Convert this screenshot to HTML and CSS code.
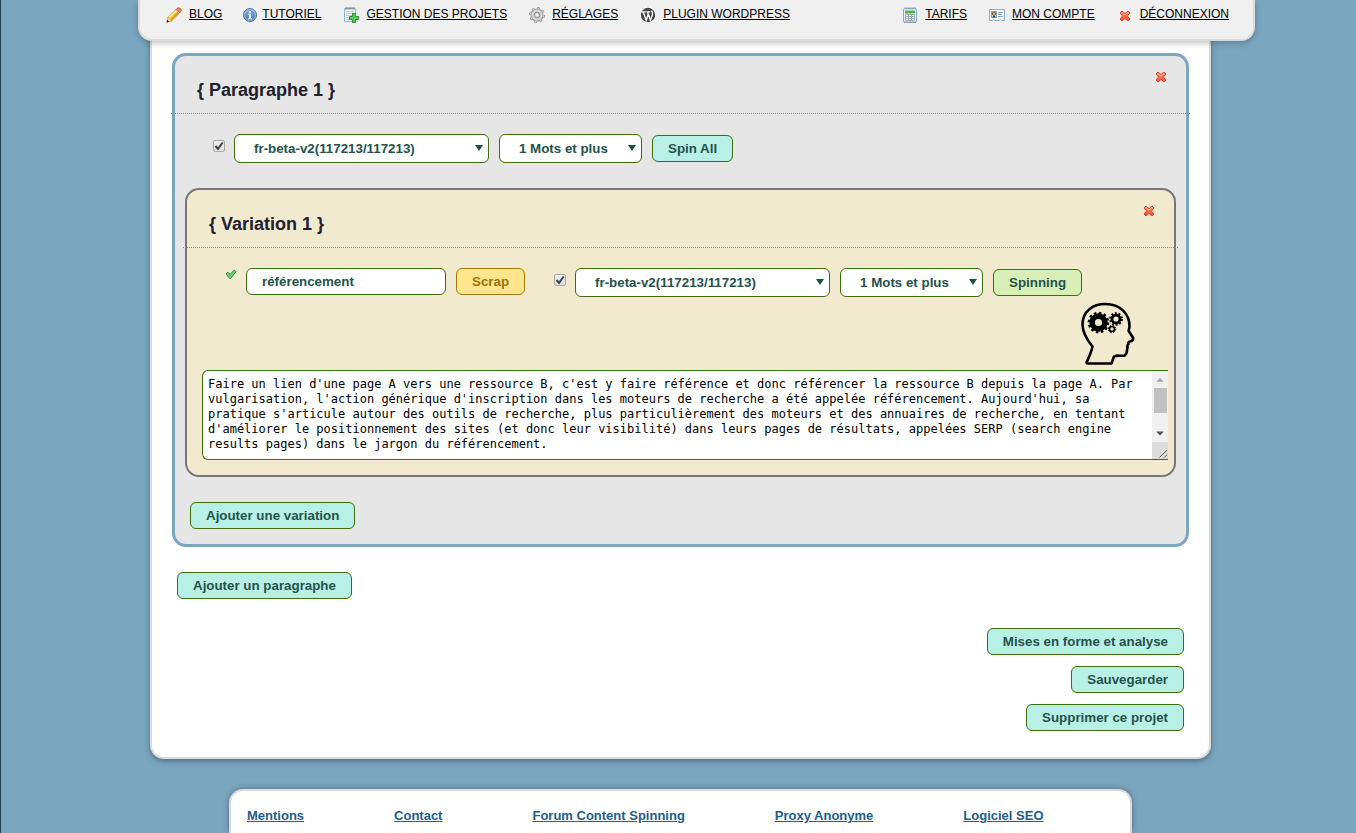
FILE: index.html
```html
<!DOCTYPE html>
<html lang="fr">
<head>
<meta charset="utf-8">
<title>Content Spinning</title>
<link rel="stylesheet" href="styles.css">
</head>
<body>
<svg class="defs" aria-hidden="true">
  <defs>
    <linearGradient id="red" x1="0" y1="0" x2="0" y2="1"><stop offset="0" stop-color="#ff9a78"/><stop offset="1" stop-color="#f04a28"/></linearGradient>
    <linearGradient id="blue" x1="0" y1="0" x2="0" y2="1"><stop offset="0" stop-color="#88b0e2"/><stop offset="1" stop-color="#4777b8"/></linearGradient>
    <symbol id="cross" viewBox="0 0 12 12">
      <path d="M3 1 L6 3.6 L9 1 L11 3 L8.4 6 L11 9 L9 11 L6 8.4 L3 11 L1 9 L3.6 6 L1 3Z" fill="url(#red)" stroke="#d8432a" stroke-linejoin="round"/>
      <path d="M3 2.4 L6 5 L9 2.4" fill="none" stroke="#ffc0a6" stroke-width=".8"/>
    </symbol>
  </defs>
</svg>
<div class="page">
  <header class="topbar">
    <nav class="nav">
      <a href="#blog"><svg viewBox="0 0 16 16"><path d="M.8 15.2 L2 10.6 L11 1.6 Q12.6.2 14.4 1.6 Q15.9 3.2 14.4 5 L5.4 14Z" fill="#f7c531" stroke="#b27a16" stroke-width=".8"/><path d="M3.2 10.6 L10.8 3" stroke="#ffea8c" stroke-width="1.5"/><path d="M4.8 13 L12.8 5" stroke="#dd9518" stroke-width="1.2"/><path d="M11 1.6 Q12.6.2 14.4 1.6 Q15.9 3.2 14.4 5 L13.6 5.8 L10.2 2.4Z" fill="#e58a80" stroke="#b4534b" stroke-width=".6"/><path d="M9.8 2.8 L13.2 6.2" stroke="#ccc" stroke-width="1"/><path d="M.8 15.2 L2 10.8 L5.2 14Z" fill="#f2d2a2"/><path d="M.5 15.5 L1.2 12.8 L3.2 14.8Z" fill="#3b2220"/></svg><span>BLOG</span></a>
      <a class="compact" href="#tutoriel"><svg viewBox="1 1 14 14"><rect x="1" y="1" width="14" height="14" fill="#f8f8f8"/><circle cx="8" cy="8" r="6.5" fill="url(#blue)" stroke="#4b76ae"/><circle cx="8" cy="8" r="5.500" fill="none" stroke="#a9c6ea" stroke-width=".7"/><path d="M7 4h2v1.700H7zM6.200 6.800H9v4.400h1v1H6v-1h1V7.700h-.8z" fill="#fff"/></svg><span>TUTORIEL</span></a>
      <a href="#projets"><svg viewBox="0 0 16 16"><path d="M1.500 1.500h11v13h-11z" fill="#f7fbff" stroke="#8bb5dd"/><path d="M3 4.500h8M3 6.500h8M3 8.500h6M3 10.500h5M3 12.500h4" stroke="#b8cbdc" stroke-width=".9"/><path d="M3 0v2.800M5 0v2.800M7 0v2.800M9 0v2.800M11 0v2.800" stroke="#777" stroke-width=".9"/><path d="M9.500 6.500h3v3h3v3h-3v3h-3v-3h-3v-3h3z" fill="#5ccb51" stroke="#24882a" stroke-width=".9"/></svg><span>GESTION DES PROJETS</span></a>
      <a href="#reglages"><svg viewBox="0 0 16 16"><circle cx="8" cy="8" r="6.900" fill="none" stroke="#888" stroke-width="2" stroke-dasharray="2.700 2.700"/><circle cx="8" cy="8" r="4.600" fill="none" stroke="#929292" stroke-width="4"/><circle cx="8" cy="8" r="4.500" fill="none" stroke="#d3d3d3" stroke-width="2.500"/><circle cx="8" cy="8" r="6.700" fill="none" stroke="#d0d0d0" stroke-width="1.200" stroke-dasharray="1.800 3.460" stroke-dashoffset="-.4"/><circle cx="8" cy="8" r="2.300" fill="#f0f0f0" stroke="#888" stroke-width=".8"/></svg><span>RÉGLAGES</span></a>
      <a href="#plugin"><svg viewBox="0 0 16 16"><circle cx="8" cy="8" r="8" fill="#fff"/><circle cx="8" cy="8" r="7.200" fill="#464646"/><path d="M1.800 4.900h4M6.300 4.900h4M3.200 5 L6.200 13.200 L8.300 7 M7.500 5 L10.400 13.200 L12.500 7.500 Q13 5.500 11.500 3.800" fill="none" stroke="#fff" stroke-width="1.400"/></svg><span>PLUGIN WORDPRESS</span></a>
      <a class="push" href="#tarifs"><svg viewBox="0 0 16 16"><rect x="1.500" y="1.500" width="13" height="13.500" rx="1" fill="#e9f2fb" stroke="#7fabd8"/><path d="M3 3.500h10v3H3z" fill="#4fb449"/><path d="M3 0v2.500M5 0v2.500M7 0v2.500M9 0v2.500M11 0v2.500M13 0v2.500" stroke="#999" stroke-width=".8"/><path d="M3.500 7.500h9v6h-9zM3.500 9.500h9M3.500 11.500h9M6.500 7.500v6M9.500 7.500v6" fill="#fff" stroke="#8c9aa8" stroke-width=".8"/><path d="M2 15.500h12" stroke="#889" stroke-width=".8"/></svg><span>TARIFS</span></a>
      <a href="#compte"><svg viewBox="0 0 16 16"><path d="M.5 2.500h15v11h-3l-1-1-1 1h-5l-1-1-1 1h-3z" fill="#f5faff" stroke="#86b0dc"/><path d="M2.500 4.500h5v6h-5z" fill="#d9e5f3" stroke="#6d8fb8" stroke-width=".8"/><circle cx="5" cy="6.700" r="1.700" fill="#e7ae51" stroke="#5b3a17" stroke-width=".8"/><path d="M3 10.300q2-2.600 4 0z" fill="#252d45"/><path d="M9 5.500h5M9 7.500h4M9 9.500h5" stroke="#88a9cc"/></svg><span>MON COMPTE</span></a>
      <a href="#deconnexion"><svg viewBox="-2 -3 16 16"><use href="#cross" width="12" height="12"/></svg><span>DÉCONNEXION</span></a>
    </nav>
  </header>

  <main class="content">
    <section class="panel">
      <div class="panel-head">
        <h2>{ Paragraphe 1 }</h2>
        <button class="close" aria-label="Supprimer le paragraphe"><svg viewBox="0 0 12 12"><use href="#cross"/></svg></button>
      </div>
      <div class="tools">
        <label class="tick"><input type="checkbox" checked aria-label="Activer le dictionnaire"><svg viewBox="0 0 12 12"><path d="M2.500 6 L5 8.800 L9.700 2.500" /></svg></label>
        <span class="pick wide"><select aria-label="Dictionnaire"><option>fr-beta-v2(117213/117213)</option></select></span>
        <span class="pick"><select aria-label="Nombre de mots"><option>1 Mots et plus</option></select></span>
        <button class="btn">Spin All</button>
      </div>

      <section class="variation">
        <div class="panel-head">
          <h2>{ Variation 1 }</h2>
          <button class="close" aria-label="Supprimer la variation"><svg viewBox="0 0 12 12"><use href="#cross"/></svg></button>
        </div>
        <div class="tools">
          <svg class="ok" viewBox="0 0 12 12"><path d="M1 5 L3 3.200 L5 5.400 L9.300 1 L11 2.700 L5.200 10 Z" fill="#67d36d" stroke="#2f9640" stroke-linejoin="round"/></svg>
          <input class="field" type="text" value="référencement" aria-label="Mot-clé">
          <button class="btn amber">Scrap</button>
          <label class="tick second"><input type="checkbox" checked aria-label="Activer le dictionnaire"><svg viewBox="0 0 12 12"><path d="M2.500 6 L5 8.800 L9.700 2.500" /></svg></label>
          <span class="pick wide"><select aria-label="Dictionnaire"><option>fr-beta-v2(117213/117213)</option></select></span>
          <span class="pick"><select aria-label="Nombre de mots"><option>1 Mots et plus</option></select></span>
          <button class="btn green">Spinning</button>
        </div>
        <div class="brain">
          <svg viewBox="0 0 54 64"><path d="M5.500 60.500 C8 55 10.500 50 11.500 44.500 C4.500 36 1.500 30 1.500 22.500 C1.500 9 12 2 24.500 2 C39 2 49 12 48.500 25 C48.300 27 47 28 48 29.500 L52.200 36 Q52.200 39 49 39.500 Q47 40 47.500 42 Q46 43 46.500 45.500 C45.500 48 47 51.500 43.500 53.500 C40 54.500 36 52.500 33 54.500 C32 57 31.500 59.500 30.500 61.500 L6.500 61.500Z" fill="none" stroke="#000" stroke-width="2.600" stroke-linejoin="round"/><g fill="none" stroke="#000"><circle cx="17.500" cy="20.500" r="6.400" stroke-width="5.600"/><circle cx="17.500" cy="20.500" r="9.700" stroke-width="2.200" stroke-dasharray="2.600 2.480"/><circle cx="35" cy="17" r="4" stroke-width="2.800"/><circle cx="35" cy="17" r="6" stroke-width="1.700" stroke-dasharray="2 1.770"/><circle cx="31" cy="27" r="2.500" stroke-width="1.700"/><circle cx="31" cy="27" r="3.700" stroke-width="1" stroke-dasharray="1.500 1.400"/></g></svg>
        </div>
        <div class="editor">
          <textarea aria-label="Texte de la variation">Faire un lien d'une page A vers une ressource B, c'est y faire référence et donc référencer la ressource B depuis la page A. Par vulgarisation, l'action générique d'inscription dans les moteurs de recherche a été appelée référencement. Aujourd'hui, sa pratique s'articule autour des outils de recherche, plus particulièrement des moteurs et des annuaires de recherche, en tentant d'améliorer le positionnement des sites (et donc leur visibilité) dans leurs pages de résultats, appelées SERP (search engine results pages) dans le jargon du référencement.</textarea>
          <div class="scroll" aria-hidden="true">
            <svg viewBox="0 0 17 17"><path d="M4.500 11 L8.500 7 L12.500 11Z" fill="#a3a3a3"/></svg>
            <i></i>
            <svg class="down" viewBox="0 0 17 17"><path d="M4.500 6.500 L8.500 10.500 L12.500 6.500Z" fill="#505050"/></svg>
            <svg class="grip" viewBox="0 0 17 17"><path d="M8 16 L16 8 M13 16 L16 13" stroke="#555"/></svg>
          </div>
        </div>
      </section>
      <div class="add"><button class="btn">Ajouter une variation</button></div>
    </section>

    <div class="add-par"><button class="btn">Ajouter un paragraphe</button></div>
    <div class="actions">
      <button class="btn">Mises en forme et analyse</button>
      <button class="btn">Sauvegarder</button>
      <button class="btn">Supprimer ce projet</button>
    </div>
  </main>

  <footer class="footer">
    <a href="#mentions">Mentions</a>
    <a href="#contact">Contact</a>
    <a href="#forum">Forum Content Spinning</a>
    <a href="#proxy">Proxy Anonyme</a>
    <a href="#logiciel">Logiciel SEO</a>
  </footer>
</div>
</body>
</html>
```
FILE: styles.css
```css
* { box-sizing: border-box; }
body {
  margin: 0;
  padding-left: 4px;
  border-left: 1px solid #233f52;
  background: #7ba6c0;
  font-family: "Liberation Sans", Arial, sans-serif;
  font-size: 13px;
}
.defs { position: absolute; width: 0; height: 0; }
.page {
  display: flex;
  flex-direction: column;
  max-width: 1061px;
  min-height: 100vh;
  margin: 0 auto;
}
.topbar {
  position: relative;
  z-index: 1;
  margin: 0 -44px 0 -12px;
  padding: 6px 24px 16px 26px;
  border: 2px solid #dadada;
  border-top: 0;
  border-radius: 0 0 14px 14px;
  background: #f0f0f0;
  box-shadow: 0 2px 6px rgba(0, 0, 0, .25);
}
.nav { display: flex; gap: 22px; }
.nav a {
  display: flex;
  gap: 7px;
  color: #000;
  font-size: 12px;
  line-height: 16px;
  white-space: nowrap;
}
.nav svg { width: 16px; height: 16px; margin-top: 1px; }
.nav .compact { gap: 5px; margin-left: -1px; }
.nav .compact svg { width: 14px; height: 14px; margin-top: 2px; }
.nav .push { margin-left: auto; }
.content {
  margin-top: -20px;
  padding: 32px 20px 26px;
  border: 2px solid #dadada;
  border-top: 0;
  border-radius: 0 0 14px 14px;
  background: #fff;
  box-shadow: 0 2px 6px rgba(0, 0, 0, .35);
}
.panel {
  border: 3px solid #7ba6c0;
  border-radius: 14px;
  background: #e6e6e6;
}
.panel-head {
  display: flex;
  justify-content: space-between;
  align-items: flex-start;
  margin: 0 -4px;
  padding: 15px 23px 12px 26px;
  border-bottom: 1px dotted #888;
}
h2 {
  margin: 9px 0 0;
  color: #20202f;
  font-size: 18px;
  line-height: 21px;
}
.close {
  width: 12px;
  height: 12px;
  padding: 0;
  border: 0;
  background: none;
}
.close svg { display: block; width: 12px; height: 12px; }
.tools {
  display: flex;
  align-items: center;
  gap: 10px;
  padding: 20px 10px 0 38px;
}
.btn, .field, select {
  border: 1px solid #3c6e0e;
  border-radius: 6px;
  color: #24534a;
  font-family: "Liberation Sans", Arial, sans-serif;
  font-weight: bold;
}
.btn {
  height: 27px;
  padding: 0 15px;
  background: #b8f0e6;
  white-space: nowrap;
}
.amber { border-color: #a57c0b; background: #ffe58c; color: #96730c; }
.green { background: #d8f0b8; }
.pick { position: relative; width: 143px; }
.pick.wide { width: 255px; }
.pick::after {
  content: "";
  position: absolute;
  top: 11px;
  right: 6px;
  border: 4px solid transparent;
  border-top: 6px solid #1f5244;
  border-bottom: 0;
}
select {
  display: block;
  width: 100%;
  height: 29px;
  padding: 0 19px;
  appearance: none;
  background: #fff;
}
.tick { position: relative; width: 12px; height: 12px; margin: 0 -1px 5px 0; }
.tick.second { margin-left: 19px; }
.tick input {
  display: block;
  width: 12px;
  height: 12px;
  margin: 0;
  appearance: none;
  border: 1px solid #a9a9a9;
  border-radius: 2px;
  background: linear-gradient(#f1f1f1, #dcdcdc);
}
.tick svg { position: absolute; inset: 0; width: 12px; height: 12px; }
.tick path { fill: none; stroke: #404040; stroke-width: 2; }
.variation {
  margin: 25px 10px;
  padding-bottom: 15px;
  border: 2px solid #777;
  border-radius: 14px;
  background: #f2eace;
}
.ok { width: 12px; height: 12px; margin: 0 -1px 16px 0; }
.field { width: 200px; height: 27px; padding: 0 15px; background: #fff; }
.variation .field, .amber { margin-bottom: 2px; }
.brain { display: flex; justify-content: flex-end; padding: 5px 39px 4px; }
.brain svg { width: 54px; height: 64px; }
.editor { position: relative; display: flex; margin: 0 6px 0 15px; }
textarea {
  flex: 1;
  height: 90px;
  padding: 6px 20px 0 5px;
  overflow: hidden;
  resize: none;
  border: 1px solid #3c6e0e;
  border-right: 0;
  border-radius: 6px 0 0 6px;
  background: #fff;
  color: #000;
  font: 12px/15px "DejaVu Sans Mono", "Liberation Mono", monospace;
}
.scroll {
  position: absolute;
  top: 1px;
  right: 0;
  bottom: 1px;
  display: flex;
  flex-direction: column;
  width: 16px;
  background: #f1f1f1;
}
.scroll svg { width: 16px; height: 17px; }
.scroll i { height: 25px; margin: 0 1px 0 2px; background: #c1c1c1; }
.scroll .down { margin-top: auto; }
.scroll .grip { background: #dcdcdc; }
.add { padding: 0 15px 15px; }
.add-par { padding: 25px 5px 0; }
.actions {
  display: flex;
  flex-direction: column;
  align-items: flex-end;
  gap: 11px;
  padding: 29px 5px 0;
}
.footer {
  display: flex;
  flex: 1;
  gap: 20px 90px;
  margin: 30px 79px 0;
  padding: 17px 16px 0;
  border: 2px solid #dadada;
  border-bottom: 0;
  border-radius: 14px 14px 0 0;
  background: #fff;
  box-shadow: 0 0 6px rgba(0, 0, 0, .35);
}
.footer a {
  color: #205e8c;
  font-weight: bold;
  line-height: 15px;
  white-space: nowrap;
}
```
